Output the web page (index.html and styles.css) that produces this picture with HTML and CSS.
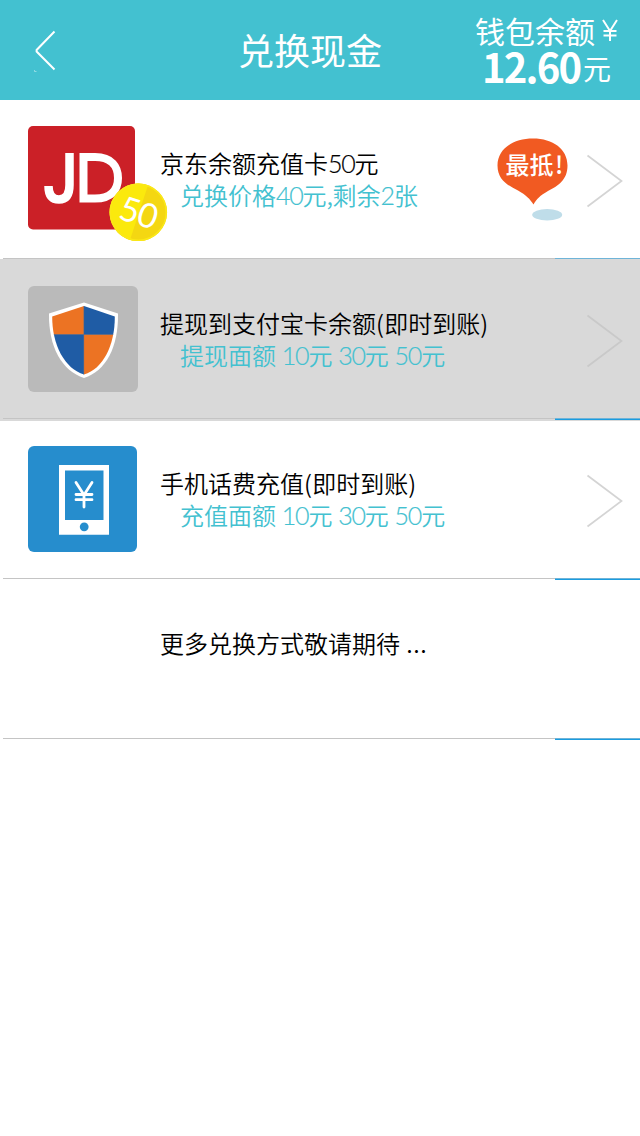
FILE: index.html
```html
<!DOCTYPE html>
<html lang="zh-CN">
<head>
<meta charset="utf-8">
<title>兑换现金</title>
<link rel="stylesheet" href="styles.css">
</head>
<body>
<header class="bar">
  <svg class="back" width="30" height="44" viewBox="30 29 30 44"><path d="M54.5 31.5 36.6 50 V51.5 L54.5 69.5" fill="none" stroke="#fff" stroke-width="2"/><path d="M34.500 70v1.500h2" fill="none" stroke="#a5e2e8" stroke-width=".8"/></svg>
  <h1 class="title">兑换现金</h1>
  <div class="wallet">
    <div class="wallet-label">钱包余额<svg class="yen" width="18" height="24" viewBox="0 0 18 24"><path d="M2 1 9 12 16 1M9 12V22M2.500 12H15.500M2.500 16.500H15.500"/></svg></div>
    <div class="wallet-sum"><b class="amount">12.60</b><span class="unit">元</span></div>
  </div>
</header>
<main class="list">
  <section class="row before-active">
    <svg class="icon" width="146" height="120" viewBox="28 126 146 120">
      <rect x="28" y="126" width="107" height="103.500" rx="5" fill="#cb2027"/>
      <path d="M69.500 153V185Q69.500 199.500 59 199.500Q48.500 199.500 48.500 186" fill="none" stroke="#fff" stroke-width="8.500"/>
      <path d="M83.500 157H95C112 157 118 167 118 178S112 198.500 95 198.500H83.500Z" fill="none" stroke="#fff" stroke-width="8"/>
      <circle cx="138.300" cy="212.300" r="28.800" fill="#f4d712"/>
      <path d="M148 185.200A28.800 28.800 0 1 0 130 239.900Z" fill="#fbe90d"/>
      <circle cx="138.300" cy="212.300" r="28" fill="none" stroke="#fae817" stroke-width="1.500"/>
      <text x="138.500" y="224.500" class="coin" text-anchor="middle" transform="rotate(18 138.300 212.300)">50</text>
    </svg>
    <div class="text"><p class="name">京东余额充值卡<span class="num">50</span>元</p><p class="info">兑换价格<span class="num">40</span>元<span class="comma">,</span>剩余<span class="num">2</span>张</p></div>
    <svg class="best" width="74" height="84" viewBox="496 138 74 84">
      <path d="M533 138.500C553 138.500 567.500 149 567.500 165.500C567.500 180 558 186 548 191C540 195.500 536.500 199 533.500 204.500C530 199 526 195 518 190.500C508 185.500 497.500 180 497.500 165.500C497.500 149 513 138.500 533 138.500Z" fill="#f15a22"/>
      <ellipse cx="547.200" cy="214.700" rx="15" ry="5.700" fill="#bfdde9"/>
      <text x="505.500" y="174" class="best-text">最抵<tspan x="555">!</tspan></text>
    </svg>
    <svg class="arrow" width="38" height="54" viewBox="586 154 38 54"><path d="M587.500 155.500 621.500 181 587.500 206.500"/></svg>
  </section>
  <section class="row active">
    <svg class="icon" width="146" height="120" viewBox="28 286 146 120">
      <rect x="28" y="286" width="110" height="106" rx="6" fill="#bababa"/>
      <path d="M84 302.500 118 313.500C118.500 347 106 371 84 378C62 371 48.500 347 49 313.500Z" fill="#fff"/>
      <clipPath id="shield"><path d="M84 306 114.800 316.500C115 345 103 369 84 374.500C65 369 52 345 52.200 316.500Z"/></clipPath>
      <g clip-path="url(#shield)"><path d="M50 300H84V334.500H50ZM84 334.500H118V380H84Z" fill="#ec7323"/><path d="M84 300H118V334.500H84ZM50 334.500H84V380H50Z" fill="#1f5ca5"/><path d="M50 334.500H118" stroke="#666b80"/><path d="M83.700 300V380" stroke="#666b80" stroke-width=".6"/></g>
    </svg>
    <div class="text"><p class="name">提现到支付宝卡余额<span class="paren">(</span>即时到账<span class="paren">)</span></p><p class="info">提现面额 <span class="num">10</span>元 <span class="num">30</span>元 <span class="num">50</span>元</p></div>
    <svg class="arrow" width="38" height="54" viewBox="586 154 38 54"><path d="M587.500 155.500 621.500 181 587.500 206.500"/></svg>
  </section>
  <section class="row">
    <svg class="icon" width="146" height="120" viewBox="28 446 146 120">
      <rect x="28" y="446" width="109" height="106" rx="6" fill="#268dcd"/>
      <path d="M59 465H109V534.700H59Z" fill="#fff"/><path d="M65 470.500H103.500V520H65Z" fill="#268dcd"/><circle cx="84.200" cy="526.800" r="4.400" fill="#268dcd"/>
      <path d="M76 482.500 84 495 92 482.500M84 495V507M76 494.500H92M76 499.700H92" fill="none" stroke="#fff" stroke-width="2.800" stroke-linecap="round"/>
    </svg>
    <div class="text"><p class="name">手机话费充值<span class="paren">(</span>即时到账<span class="paren">)</span></p><p class="info">充值面额 <span class="num">10</span>元 <span class="num">30</span>元 <span class="num">50</span>元</p></div>
    <svg class="arrow" width="38" height="54" viewBox="586 154 38 54"><path d="M587.500 155.500 621.500 181 587.500 206.500"/></svg>
  </section>
  <section class="row">
    <div class="text more"><p class="name">更多兑换方式敬请期待 <span class="dots">...</span></p></div>
  </section>
</main>
</body>
</html>
```
FILE: styles.css
```css
* { box-sizing: border-box; }
body { margin: 0; background: #fff; font-family: "Noto Sans CJK SC", sans-serif; font-weight: 350; }
h1, p { margin: 0; font-weight: inherit; }
.bar { height: 100px; background: #43c1d0; color: #fff; display: grid; grid-template-columns: 238px 237px 165px; }
.back { margin: 29px 0 0 30px; }
.title { font-size: 36px; line-height: 98px; font-weight: 400; }
.wallet { padding-top: 12px; white-space: nowrap; }
.wallet-label { font-size: 30px; line-height: 36px; height: 36px; font-weight: 400; display: flex; }
.yen { margin: 7px 0 0 6px; fill: none; stroke: #fff; stroke-width: 2; }
.wallet-sum { display: flex; align-items: center; height: 38px; padding-left: 7px; }
.amount { font-weight: 700; font-size: 40px; line-height: 36px; padding-bottom: 2px; width: 101px; letter-spacing: -1.8px; }
.unit { font-size: 28px; line-height: 36px; padding-top: 2px; font-weight: 400; }
.row { height: 160px; padding: 26px 18px 0 28px; display: grid; grid-template-columns: 132px 335px 1fr auto; align-items: start; background: linear-gradient(#c4c4c4, #c4c4c4) 3px 158px / 552px 1px no-repeat, linear-gradient(#6fb4d8, #6fb4d8) 555px 158px / 85px 1px no-repeat, linear-gradient(#1a9ce0, #1a9ce0) 555px 159px / 85px 1px no-repeat; }
.before-active { background: linear-gradient(#c4c4c4, #c4c4c4) 3px 158px / 552px 1px no-repeat, linear-gradient(#6fb4d8, #6fb4d8) 555px 158px / 85px 1px no-repeat, linear-gradient(#d9d9d9, #d9d9d9) 0 159px / 640px 1px no-repeat; }
.active { background-color: #d9d9d9; box-shadow: 0 1px #d9d9d9; }
.icon { overflow: visible; }
.text { grid-column: 2; padding-top: 21px; white-space: pre; }
.name, .info { font-size: 24px; line-height: 32px; height: 32px; color: #000; }
.info { padding-left: 20px; color: #43c1d0; word-spacing: .4px; }
.num { font-family: Lato, sans-serif; font-weight: 300; font-size: 25px; letter-spacing: -1.2px; -webkit-text-stroke: .2px currentColor; }
.paren { display: inline-block; width: 8.300px; }
.comma { display: inline-block; width: 6px; }
.dots { margin-left: 1px; letter-spacing: .5px; }
.best { margin-top: 12px; margin-left: 1px; }
.arrow { grid-column: 4; margin: 28px -2px 0 0; }
.arrow path { fill: none; stroke: #d4d4d4; stroke-width: 1.7; }
.active .arrow path { stroke: #c9c9c9; }
.coin { font: 400 34px Lato, sans-serif; fill: #fff; letter-spacing: -1px; }
.best-text { font: 500 24px "Noto Sans CJK SC", sans-serif; fill: #fff; }
```
